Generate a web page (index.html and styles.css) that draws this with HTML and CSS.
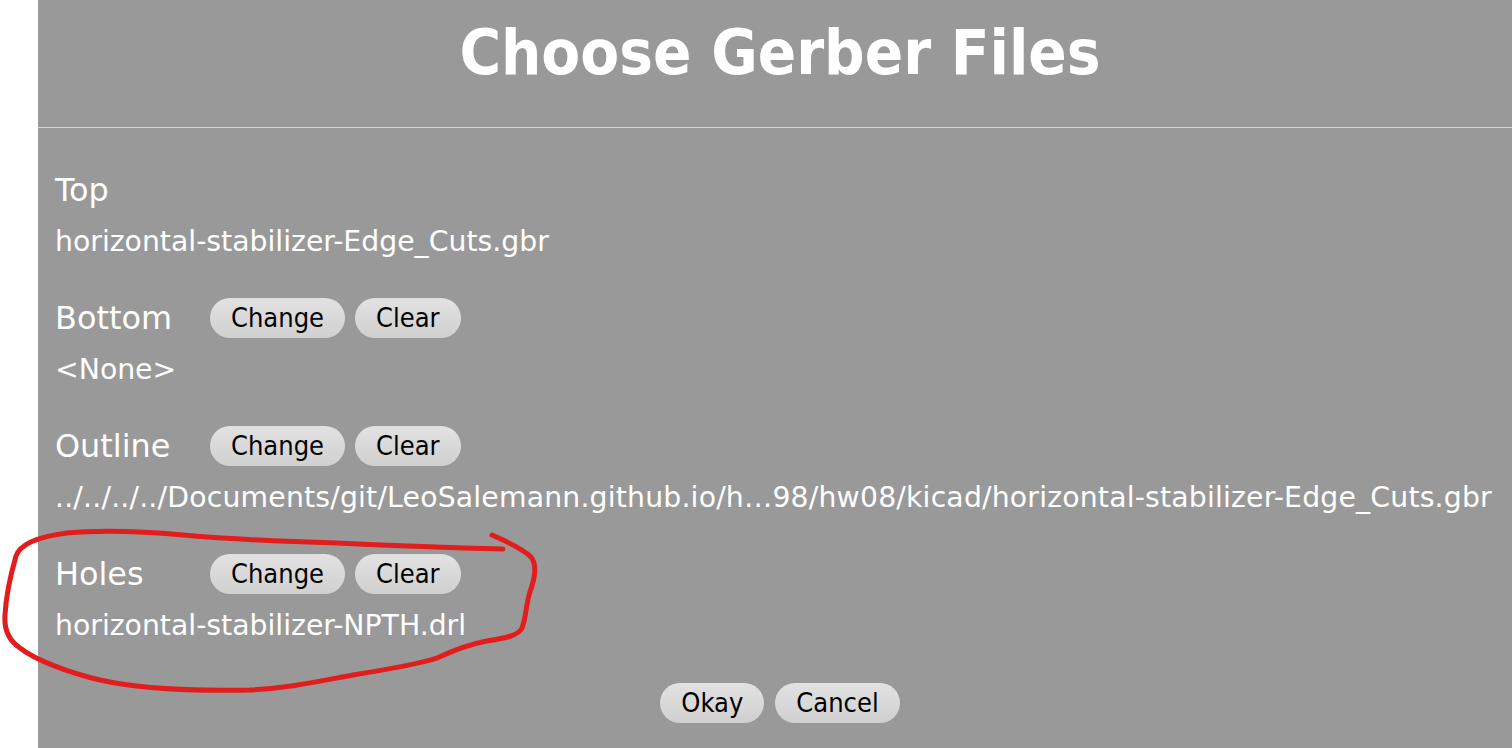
FILE: index.html
```html
<!DOCTYPE html>
<html>
<head>
<meta charset="utf-8">
<link rel="stylesheet" href="styles.css">
</head>
<body>
<div class="panel">
  <header class="head"><h1 class="title">Choose Gerber Files</h1></header>
  <main class="content">
    <section class="sec">
      <div class="row"><span class="label">Top</span></div>
      <div class="file">horizontal-stabilizer-Edge_Cuts.gbr</div>
    </section>
    <section class="sec">
      <div class="row"><span class="label">Bottom</span><button class="btn">Change</button><button class="btn">Clear</button></div>
      <div class="file">&lt;None&gt;</div>
    </section>
    <section class="sec">
      <div class="row"><span class="label">Outline</span><button class="btn">Change</button><button class="btn">Clear</button></div>
      <div class="file long">../../../../Documents/git/LeoSalemann.github.io/h…98/hw08/kicad/horizontal-stabilizer-Edge_Cuts.gbr</div>
    </section>
    <section class="sec">
      <div class="row"><span class="label">Holes</span><button class="btn">Change</button><button class="btn">Clear</button></div>
      <div class="file">horizontal-stabilizer-NPTH.drl</div>
    </section>
    <div class="actions"><button class="btn">Okay</button><button class="btn">Cancel</button></div>
  </main>
  <svg class="scribble" width="560" height="200" viewBox="0 520 560 200">
    <path d="M492 535 C505 541 522 548 531 557 C538 566 534 580 530 592 C526 604 526 618 522 628 C518 636 505 638 487 641 C470 644 450 652 437 658 C420 664 390 669 353 675 C320 681 290 688 250 690 C200 691 140 689 100 680 C70 673 35 660 20 648 C8 640 4 628 5 615 C6 595 12 570 16 556 C20 545 35 537 67 533 C110 529 150 532 183 535 C230 539 300 542 337 543 C400 546 460 548 503 549"/>
  </svg>
</div>
</body>
</html>
```
FILE: styles.css
```css
html, body {
  margin: 0;
  padding: 0;
  background: #ffffff;
  overflow: hidden;
  height: 748px;
}
.panel {
  position: relative;
  margin-left: 38px;
  width: 1484px;
  height: 748px;
  background: #999999;
  font-family: "DejaVu Sans", sans-serif;
  color: #ffffff;
}
.head {
  height: 127px;
  border-bottom: 1px solid #d4d4d4;
  display: flex;
  align-items: center;
  justify-content: center;
}
.title {
  margin: 0;
  font-family: "DejaVu Sans Condensed", "DejaVu Sans", sans-serif;
  font-size: 63px;
  font-weight: bold;
  line-height: 1;
  padding-bottom: 22px;
}
.content {
  padding: 42px 0 0 17px;
  display: flex;
  flex-direction: column;
}
.sec {
  display: flex;
  flex-direction: column;
  gap: 14px;
  margin-bottom: 38px;
}
.row {
  display: flex;
  align-items: center;
  height: 40px;
  gap: 10px;
}
.label {
  width: 145px;
  font-size: 31.9px;
  line-height: 40px;
}
.file {
  font-size: 28.3px;
  line-height: 36px;
  white-space: nowrap;
}
.file.long {
  letter-spacing: 0.18px;
}
.btn {
  height: 40px;
  padding: 0 21px;
  border: none;
  border-radius: 20px;
  background: linear-gradient(#e2e2e2, #d0d0d0);
  font-family: "DejaVu Sans Condensed", "DejaVu Sans", sans-serif;
  font-size: 27px;
  color: #000000;
  line-height: 40px;
}
.actions {
  margin-top: 1px;
  display: flex;
  justify-content: center;
  gap: 11px;
  padding-right: 17px;
}
.scribble {
  position: absolute;
  left: -38px;
  top: 520px;
  overflow: visible;
}
.scribble path {
  fill: none;
  stroke: #e21d1d;
  stroke-width: 5;
  stroke-linecap: round;
  stroke-linejoin: round;
}
```
